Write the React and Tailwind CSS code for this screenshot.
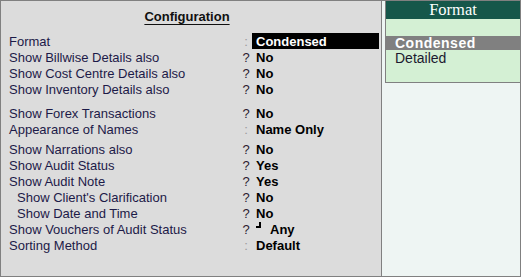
const rows = [
  { label: 'Format', sep: ':', value: 'Condensed', active: true },
  { label: 'Show Billwise Details also', sep: '?', value: 'No' },
  { label: 'Show Cost Centre Details also', sep: '?', value: 'No' },
  { label: 'Show Inventory Details also', sep: '?', value: 'No', gap: 'mb-[8px]' },
  { label: 'Show Forex Transactions', sep: '?', value: 'No' },
  { label: 'Appearance of Names', sep: ':', value: 'Name Only', gap: 'mb-[4px]' },
  { label: 'Show Narrations also', sep: '?', value: 'No' },
  { label: 'Show Audit Status', sep: '?', value: 'Yes' },
  { label: 'Show Audit Note', sep: '?', value: 'Yes' },
  { label: "Show Client's Clarification", sep: '?', value: 'No', indent: true },
  { label: 'Show Date and Time', sep: '?', value: 'No', indent: true },
  { label: 'Show Vouchers of Audit Status', sep: '?', value: 'Any', corner: true },
  { label: 'Sorting Method', sep: ':', value: 'Default' },
]

function Row({ row }) {
  return (
    <div className={`flex items-center h-[16px] ${row.gap || ''}`}>
      <div className={`w-[241px] text-[#1c1a48] ${row.indent ? 'pl-[16px]' : 'pl-[8px]'}`}>
        {row.label}
      </div>
      <div
        className={`w-[8px] text-center ${row.sep === ':' ? 'text-[#9a9a9a]' : 'text-[#2a2030]'}`}
      >
        {row.sep}
      </div>
      {row.active ? (
        <div className="ml-[2px] w-[127px] h-[16px] bg-black text-white font-bold pl-[4px] flex items-center">
          {row.value}
        </div>
      ) : row.corner ? (
        <div className="ml-[6px] flex items-center font-bold text-black">
          <span className="relative w-[14px] h-[16px]">
            <span className="absolute left-[3px] top-[1px] w-[2px] h-[6px] bg-black" />
            <span className="absolute left-0 top-[5px] w-[5px] h-[2px] bg-black" />
          </span>
          {row.value}
        </div>
      ) : (
        <div className="ml-[6px] font-bold text-black">{row.value}</div>
      )}
    </div>
  )
}

export default function App() {
  return (
    <div
      className="w-[521px] h-[277px] border border-[#808080] flex bg-[#dcdcdc] text-[13px] leading-none"
      style={{ fontFamily: '"Liberation Sans", Arial, sans-serif' }}
    >
      <div className="w-[381px] border-r border-[#808080] flex flex-col">
        <div className="h-[32px] flex items-start justify-center pt-[9px]">
          <span className="font-bold text-[13px] text-[#101010] underline underline-offset-[3px] mr-[8px]">
            Configuration
          </span>
        </div>
        {rows.map((row) => (
          <Row key={row.label} row={row} />
        ))}
      </div>

      <div className="flex-1 bg-[#eef5f3] pl-[3px]">
        <div className="h-[82px] border-l border-b border-[#808080] bg-[#d4f0d4] flex flex-col">
          <div
            className="h-[18px] bg-[#16574a] text-white text-[16.5px] flex items-center justify-center"
            style={{ fontFamily: '"Liberation Serif", "Times New Roman", serif' }}
          >
            Format
          </div>
          <div className="h-[17px]" />
          <div className="h-[14px] bg-[#808080] text-white font-bold text-[14px] tracking-[0.5px] pl-[9px] flex items-center">
            Condensed
          </div>
          <div className="h-[16px] pl-[9px] flex items-center text-[#1c1a30] text-[14px]">Detailed</div>
        </div>
      </div>
    </div>
  )
}
